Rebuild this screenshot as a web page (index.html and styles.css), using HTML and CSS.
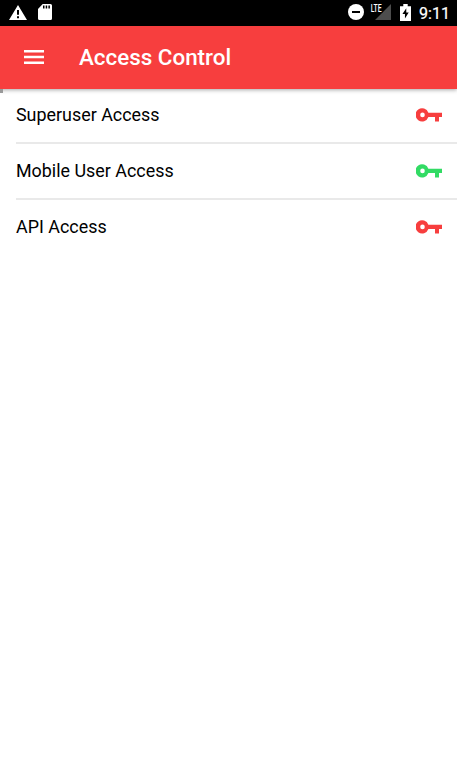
FILE: index.html
```html
<!DOCTYPE html>
<html lang="en">
<head>
<meta charset="utf-8">
<title>Access Control</title>
<link rel="stylesheet" href="styles.css">
</head>
<body>
<svg class="defs" width="0" height="0">
  <symbol id="key" viewBox="0 0 26 14">
    <path fill="currentColor" fill-rule="evenodd" d="M12.4 4.7H26v4.3h-3v4.4h-4V9h-6.6A6.6 6.6 0 1 1 12.4 4.7zM6.5 4.6a2.3 2.3 0 1 0 0 4.6a2.3 2.3 0 0 0 0-4.6z"/>
  </symbol>
</svg>
<div class="status">
  <svg class="warning" width="18" height="15" viewBox="0 0 18 16" preserveAspectRatio="none"><path fill="#fff" fill-rule="evenodd" d="M9 0L18 16H0zM8 5.3v5h2V5.3zM8 12v2h2v-2z"/></svg>
  <svg class="card" width="14" height="16" viewBox="0 0 14 16"><path fill="#fff" fill-rule="evenodd" d="M4.7 0H12.5Q14 0 14 1.5V14.5Q14 16 12.5 16H1.5Q0 16 0 14.5V5zM5 1.5v3h1.5V1.5zM7.7 1.5v3h1.5V1.5zM10.4 1.5v3h1.5V1.5z"/></svg>
  <svg class="dnd" width="16" height="16" viewBox="0 0 16 16"><circle cx="8" cy="8" r="8" fill="#fff"/><path d="M4 7h8v2H4z"/></svg>
  <div class="signal">
    <svg width="16" height="16" viewBox="0 0 16 16"><path fill="#4d4d4d" d="M16 0V16H0z"/></svg>
    <span class="lte-label">LTE</span>
  </div>
  <svg class="battery" width="11" height="17" viewBox="0 0 10 16" preserveAspectRatio="none"><path fill="#fff" fill-rule="evenodd" d="M3 0h4v2h3v14H0V2h3zM5.7 4L2.2 9.5h2.3v4.2L7.9 8H5.7z"/></svg>
  <span class="time">9:11</span>
</div>
<header class="toolbar">
  <svg class="menu" width="20" height="14" viewBox="0 0 20 14"><path fill="#fff" d="M0 0h20v2.4H0zM0 5.8h20v2.4H0zM0 11.6h20V14H0z"/></svg>
  <h1>Access Control</h1>
</header>
<main class="list">
  <div class="row"><span>Superuser Access</span><svg class="key denied"><use href="#key"/></svg></div>
  <div class="row"><span>Mobile User Access</span><svg class="key granted"><use href="#key"/></svg></div>
  <div class="row"><span>API Access</span><svg class="key denied"><use href="#key"/></svg></div>
  <i class="progress"></i>
</main>
</body>
</html>
```
FILE: styles.css
```css
* { box-sizing: border-box; }
body { margin: 0; background: #fff; color: #000; font-family: Roboto, "Liberation Sans", sans-serif; }
svg { display: block; flex: none; }
.defs { position: absolute; }
.status { display: flex; align-items: center; height: 26px; padding: 0 7px 2px 9px; background: #000; color: #fff; }
.card { margin-left: 11px; }
.dnd { margin-left: auto; }
.signal { position: relative; margin-left: 11px; }
.lte-label { position: absolute; left: -5px; top: 0; padding: 0 1px; background: #000; font-size: 10.5px; line-height: 9px; font-weight: 500; transform: scaleX(.65); transform-origin: left; }
.battery { margin-left: 9px; }
.time { width: 31px; margin-left: 8px; padding-top: 3px; font-size: 16.1px; line-height: 24px; font-weight: 400; -webkit-text-stroke: .2px #fff; }
.toolbar { position: relative; z-index: 1; display: flex; align-items: center; height: 63px; padding: 0 0 1px 24px; background: #f73e3e; color: #fff; box-shadow: 0 1px 4px rgba(0,0,0,.35); }
h1 { margin: 0 0 0 35px; padding-bottom: 1px; font-size: 22.4px; line-height: 28px; font-weight: 500; }
.list { position: relative; padding-left: 16px; }
.row { display: flex; align-items: center; justify-content: space-between; height: 56px; padding-right: 15px; border-bottom: 2px solid #e9e9e9; font-size: 17.9px; line-height: 24px; }
.row:first-child { height: 55px; padding-bottom: 1px; }
.row:nth-child(3) { border-bottom-color: transparent; }
.key { width: 26px; height: 14px; }
.denied { color: #f73e3e; }
.granted { color: #32db64; }
.progress { position: absolute; z-index: 2; left: 0; top: 0; width: 3px; height: 4px; background: #999; }
```
